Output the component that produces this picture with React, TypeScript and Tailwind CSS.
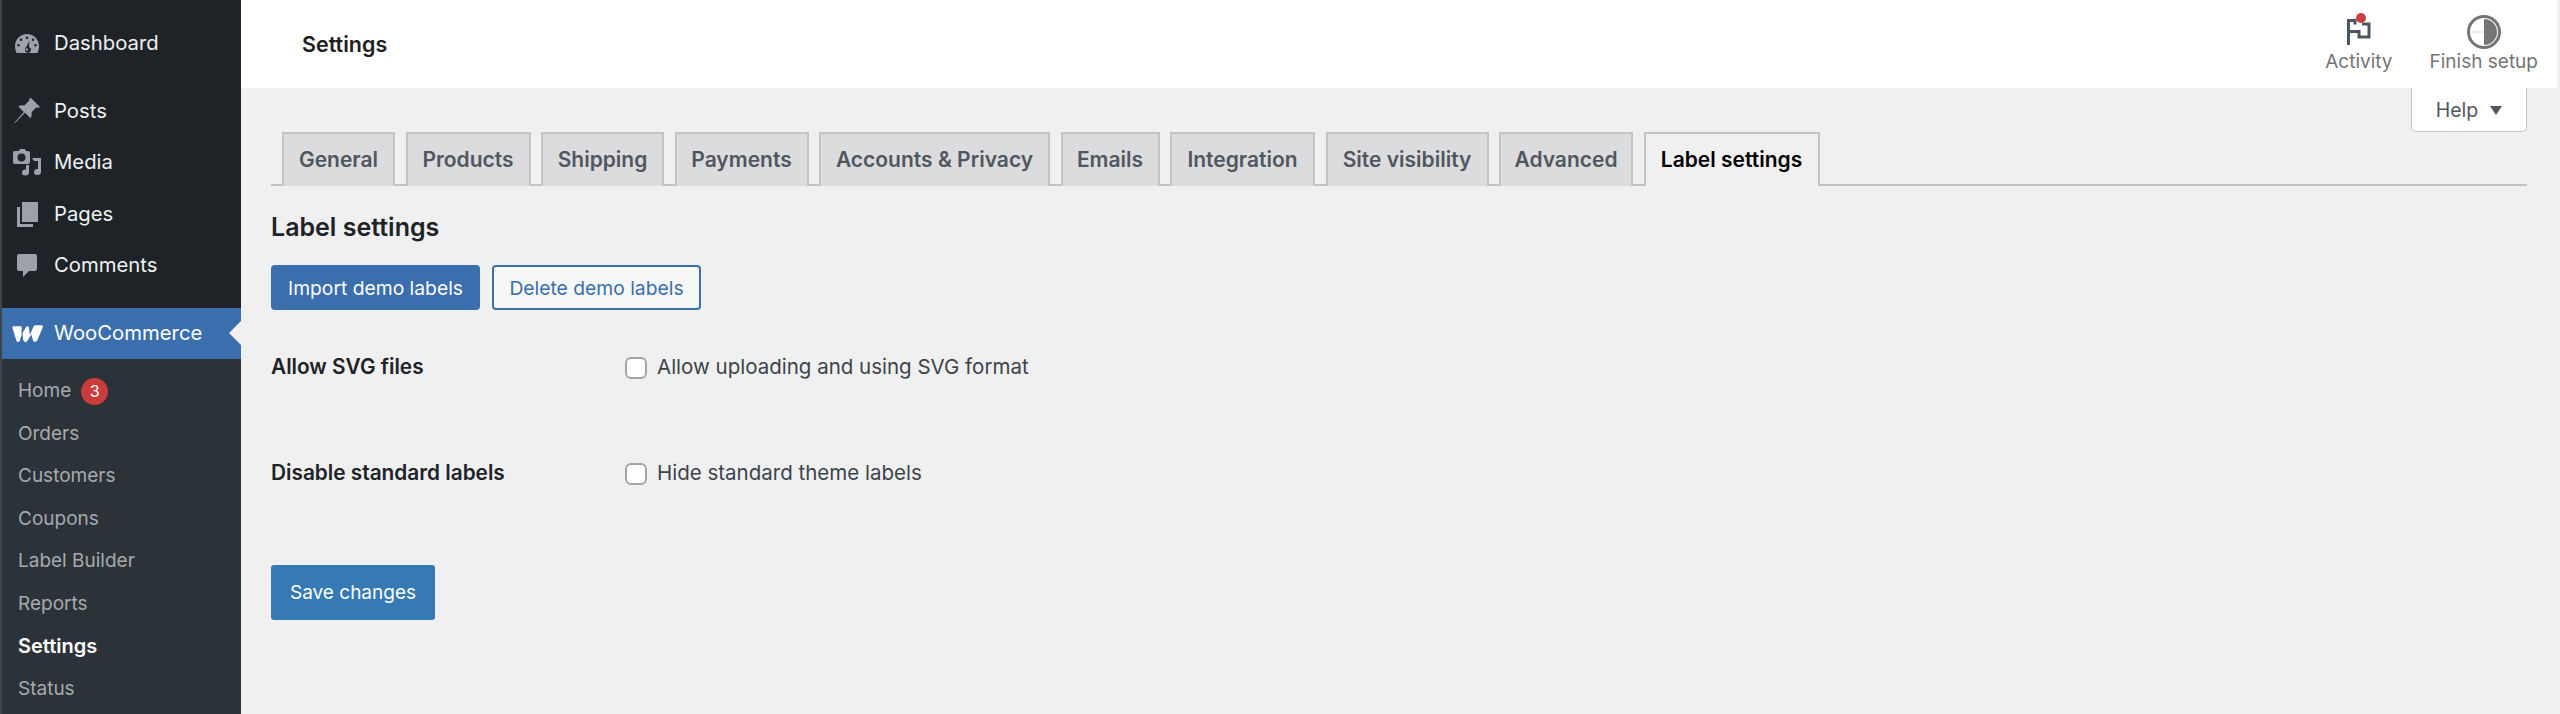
const font = "font-['Inter','Noto_Sans',sans-serif]";

const submenu = ['Orders', 'Customers', 'Coupons', 'Label Builder', 'Reports', 'Settings', 'Status'];
const tabs = [
  { label: 'General', width: 'w-[113px]' },
  { label: 'Products', width: 'w-[125px]' },
  { label: 'Shipping', width: 'w-[123px]' },
  { label: 'Payments', width: 'w-[134px]' },
  { label: 'Accounts & Privacy', width: 'w-[231px]' },
  { label: 'Emails', width: 'w-[99px]' },
  { label: 'Integration', width: 'w-[145px]' },
  { label: 'Site visibility', width: 'w-[163px]' },
  { label: 'Advanced', width: 'w-[134px]' },
];

const DashboardIcon = () => (
  <svg viewBox="0 0 24 19" className="w-[24px] h-[19px] fill-[#9ca2a7]">
    <path fillRule="evenodd" d="M12 0C5.400 0 0 5.300 0 12c0 2.500.5 4.800 1.500 7h21c1-2.200 1.500-4.500 1.500-7C24 5.300 18.600 0 12 0zM12 2.500a1.300 1.300 0 1 1 0 2.600 1.300 1.300 0 0 1 0-2.600zM6 4.500a1.300 1.300 0 1 1 0 2.600 1.300 1.300 0 0 1 0-2.600zM18 4.500a1.300 1.300 0 1 1 0 2.600 1.300 1.300 0 0 1 0-2.600zM3.500 10a1.300 1.300 0 1 1 0 2.600 1.300 1.300 0 0 1 0-2.600zM20.500 10a1.300 1.300 0 1 1 0 2.600 1.300 1.300 0 0 1 0-2.600zM14.500 6.500l-.6 6.500a3 3 0 1 1-4 2.500c0-1 .6-1.800 1.400-2.400z" />
    <circle cx="11.800" cy="15.500" r="1.300" />
  </svg>
);

const PinIcon = () => (
  <svg viewBox="0 0 26 26" className="w-[26px] h-[26px] fill-[#9ca2a7]">
    <path d="M17 0l9 9-2 1-1.500-.8-5 5c.6 2.400.2 4.400-1 6l-5.500-5.500L1 25l-.5-.5 9.300-10.500-5.500-5.500c1.600-1.200 3.600-1.600 6-1l5-5L15 1z" />
  </svg>
);

const MediaIcon = () => (
  <svg viewBox="0 0 28 27" className="w-[28px] h-[27px] fill-[#9ca2a7]">
    <path fillRule="evenodd" d="M7 0h5l1 2h2a2 2 0 0 1 2 2v9a2 2 0 0 1-2 2H2a2 2 0 0 1-2-2V4a2 2 0 0 1 2-2h4zM8.500 4.500a4 4 0 1 0 0 8 4 4 0 0 0 0-8z" />
    <path d="M19 9h9v14a3.500 3 0 1 1-3-3V12h-4zM13 19v1.500a3.500 3 0 1 0 3 3V16h-3z" />
  </svg>
);

const PagesIcon = () => (
  <svg viewBox="0 0 21 25" className="w-[21px] h-[25px] fill-[#9ca2a7]">
    <path d="M5 0h16v20H5z" />
    <path d="M0 5h3v17h13v3H0z" />
  </svg>
);

const CommentIcon = () => (
  <svg viewBox="0 0 20 24" className="w-[20px] h-[24px] fill-[#9ca2a7]">
    <path d="M2 0h16a2 2 0 0 1 2 2v13a2 2 0 0 1-2 2h-6l-6 6v-6H2a2 2 0 0 1-2-2V2a2 2 0 0 1 2-2z" />
  </svg>
);

const WooIcon = () => (
  <svg viewBox="0 0 30 17" className="w-[31px] h-[18px] fill-white">
    <path d="M1.500 1H8c1 0 1.600.8 1.500 1.600L9 9.500l4.400-7.600c.8-1.300 2.800-1 3 .6l.9 7 3.400-8C21 .6 22 0 23.500 0H28.500c1.200 0 1.800 1 1.300 2l-5.300 12.500c-.8 2-3.600 2.100-4.200 0l-1.600-5.500-3.800 6c-1.100 1.800-3.700 1.500-4-.6L10 7.500 7.500 15c-.5 1.600-2.600 1.600-3.200 0L.5 3C.1 1.900.6 1 1.500 1z" />
  </svg>
);

const NavItem = ({ icon, label, h }: { icon: React.ReactNode; label: string; h: string }) => (
  <div className={`flex items-center ${h} text-[#f0f0f1] text-[20.300px]`}>
    <div className="w-[50px] mr-[2px] flex justify-center">{icon}</div>
    <span>{label}</span>
  </div>
);

export default function App() {
  return (
    <div className={`${font} flex h-[714px] w-[2560px] overflow-hidden bg-[#f0f0f1]`}>
      {/* Admin menu */}
      <div className="w-[241px] shrink-0 h-full bg-[#1d2327] border-l-2 border-[#3e4549] flex flex-col">
        <div className="pt-[18px] h-[85px]">
          <NavItem icon={<DashboardIcon />} label="Dashboard" h="h-[50px]" />
        </div>
        <div className="flex flex-col">
          <NavItem icon={<PinIcon />} label="Posts" h="h-[52px]" />
          <NavItem icon={<MediaIcon />} label="Media" h="h-[51px]" />
          <NavItem icon={<PagesIcon />} label="Pages" h="h-[52px]" />
          <NavItem icon={<CommentIcon />} label="Comments" h="h-[51px]" />
        </div>
        <div className="h-[17px]" />
        <div className="relative h-[51px] bg-[#3a6ead] text-white text-[20.300px] flex items-center shrink-0">
          <div className="w-[50px] mr-[2px] flex justify-center"><WooIcon /></div>
          <span>WooCommerce</span>
          <div className="absolute right-0 top-[13px] w-0 h-0 border-y-[12px] border-y-transparent border-r-[12px] border-r-[#f0f0f1]" />
        </div>
        <div className="flex-1 bg-[#2c3338] pt-[11px] text-[#a7aaad] text-[19px] pl-[16px]">
          <div className="h-[42.5px] flex items-center">
            <span>Home</span>
            <span className="ml-[10px] w-[27px] h-[27px] rounded-full bg-[#c93c3c] text-white text-[16px] flex items-center justify-center">3</span>
          </div>
          {submenu.map(item => (
            <div
              key={item}
              className={`h-[42.5px] flex items-center ${item === 'Settings' ? 'font-semibold text-white text-[20px]' : ''}`}
            >
              {item}
            </div>
          ))}
        </div>
      </div>

      {/* Main */}
      <div className="flex-1 min-w-0 flex flex-col">
        <div className="h-[88px] shrink-0 bg-white flex items-center justify-between mr-[3px] pl-[61px] pr-[19px]">
          <h1 className="text-[21.500px] font-semibold text-[#1e1e1e]">Settings</h1>
          <div className="flex gap-[37px] text-[19px] text-[#757575] items-end self-start pt-[15px]">
            <div className="flex flex-col items-center">
              <div className="relative h-[34px] w-[24px]">
                <svg viewBox="0 0 24 26" className="w-[24px] h-[26px] absolute left-0 top-[4px] fill-none stroke-[#4b5563] stroke-[3]">
                  <path d="M1.500 26V1.500H8V5.500" />
                  <path d="M1.500 12.500H12V18H22V5H15" />
                </svg>
                <div className="absolute left-[9px] top-[-2px] w-[10px] h-[10px] rounded-full bg-[#cc4040]" />
              </div>
              <span className="mt-[1px] leading-[24px]">Activity</span>
            </div>
            <div className="flex flex-col items-center">
              <svg viewBox="0 0 34 34" className="w-[34px] h-[34px]">
                <circle cx="17" cy="17" r="15.500" fill="#fff" stroke="#757575" strokeWidth="3" />
                <path d="M17 4a13 13 0 0 1 0 26z" fill="#757575" />
                <path d="M4 17h13" stroke="#ddd" strokeWidth="1" />
              </svg>
              <span className="mt-[1px] leading-[24px]">Finish setup</span>
            </div>
          </div>
        </div>

        <div className="flex-1 pl-[30px] pr-[33px] relative">
          <div className="absolute right-[33px] top-0 w-[116px] h-[44px] bg-white border border-t-0 border-[#c3c4c7] rounded-b-[5px] flex items-center justify-center gap-[12px] text-[#50575e] text-[19.500px] pt-[2px]">
            <span>Help</span>
            <div className="w-0 h-0 border-x-[6.500px] border-x-transparent border-t-[9px] border-t-[#50575e]" />
          </div>

          <div className="pt-[44px] flex border-b-2 border-[#c3c4c7] h-[98px] pl-[11px] gap-[10.500px]">
            {tabs.map(tab => (
              <div
                key={tab.label}
                className={`${tab.width} h-[54px] shrink-0 bg-[#dcdcde] border-2 border-b-0 border-[#c3c4c7] text-[#50575e] text-[21px] font-semibold flex items-center justify-center`}
              >
                {tab.label}
              </div>
            ))}
            <div className="w-[176px] h-[54px] shrink-0 bg-[#f0f0f1] border-2 border-b-0 border-[#c3c4c7] text-black text-[21px] font-semibold flex items-center justify-center">
              Label settings
            </div>
          </div>

          <h2 className="mt-[25px] text-[25px] leading-[32px] font-semibold text-[#1d2327]">Label settings</h2>

          <div className="mt-[22px] flex gap-[12px]">
            <button className="w-[209px] h-[45px] bg-[#3a6ead] rounded-[4px] text-white text-[19.300px] pt-[2px]">Import demo labels</button>
            <button className="w-[209px] h-[45px] bg-[#f6f7f7] border-2 border-[#3a6ead] rounded-[4px] text-[#3a6ead] text-[19.300px] pt-[2px]">Delete demo labels</button>
          </div>

          <div className="mt-[45px] flex h-[106px]">
            <div className="w-[354px] text-[20.800px] font-semibold text-[#1d2327] leading-[24px]">Allow SVG files</div>
            <label className="flex gap-[10px] h-[24px] items-center text-[20.500px] text-[#3c434a] pt-[1px]">
              <span className="w-[22px] h-[22px] rounded-[6px] bg-white border-2 border-[#a3a5a9]" />
              Allow uploading and using SVG format
            </label>
          </div>
          <div className="flex h-[106px]">
            <div className="w-[354px] text-[20.800px] font-semibold text-[#1d2327] leading-[24px]">Disable standard labels</div>
            <label className="flex gap-[10px] h-[24px] items-center text-[20.500px] text-[#3c434a] pt-[1px]">
              <span className="w-[22px] h-[22px] rounded-[6px] bg-white border-2 border-[#a3a5a9]" />
              Hide standard theme labels
            </label>
          </div>

          <button className="mt-[-2px] w-[164px] h-[55px] bg-[#3579b5] rounded-[3px] text-white text-[19px] pt-[2px]">Save changes</button>
        </div>
      </div>
    </div>
  );
}
